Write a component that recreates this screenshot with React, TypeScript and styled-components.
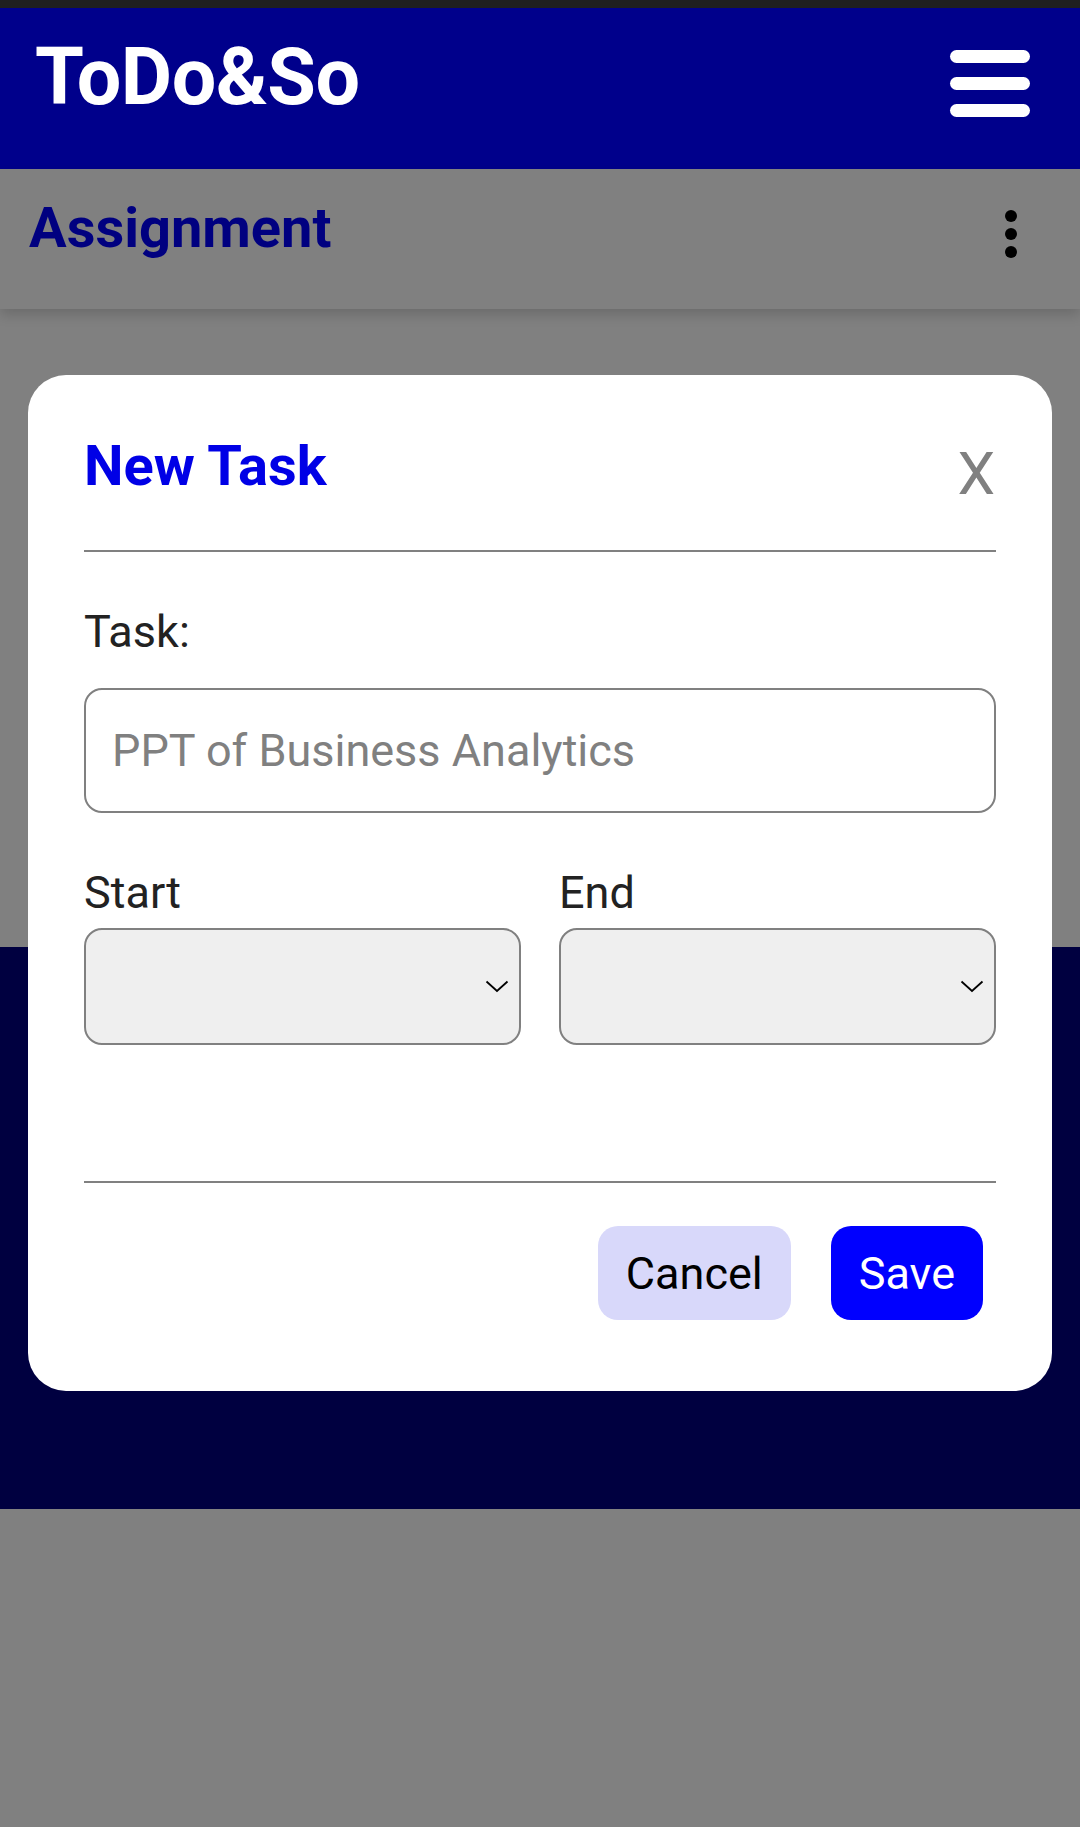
import React from "react";
import styled, { createGlobalStyle } from "styled-components";

const GlobalStyle = createGlobalStyle`
  html, body {
    margin: 0;
    padding: 0;
    background: #808080;
  }
  * { box-sizing: border-box; }
  body {
    font-family: Roboto, "Noto Sans", "Liberation Sans", sans-serif;
  }
`;

const Page = styled.div`
  position: relative;
  width: 1080px;
  min-height: 1827px;
  background: #808080;
  display: flex;
  flex-direction: column;
`;

const StatusStrip = styled.div`
  height: 8px;
  background: #1f1f1f;
`;

const Header = styled.header`
  height: 161px;
  background: #00008b;
  display: flex;
  justify-content: space-between;
  align-items: flex-start;
  padding: 0 50px 0 35px;
`;

const Logo = styled.h1`
  margin: 30px 0 0;
  font-size: 79px;
  line-height: 79px;
  font-weight: 700;
  color: #ffffff;
  letter-spacing: -0.5px;
`;

const MenuButton = styled.div`
  margin-top: 42px;
  width: 80px;
  display: flex;
  flex-direction: column;
  gap: 14px;
`;

const MenuBar = styled.span`
  display: block;
  height: 13px;
  border-radius: 7px;
  background: #ffffff;
`;

const SubBar = styled.div`
  position: relative;
  z-index: 1;
  height: 140px;
  background: #808080;
  box-shadow: 0 6px 12px rgba(0, 0, 0, 0.16);
  display: flex;
  justify-content: space-between;
  align-items: flex-start;
  padding: 0 63px 0 29px;
`;

const SectionTitle = styled.h2`
  margin: 26px 0 0;
  font-size: 56px;
  line-height: 66px;
  font-weight: 700;
  color: #000080;
`;

const Kebab = styled.div`
  margin-top: 41px;
  display: flex;
  flex-direction: column;
  gap: 6px;
`;

const Dot = styled.span`
  width: 12px;
  height: 12px;
  border-radius: 50%;
  background: #000000;
`;

const GreySpace = styled.div`
  height: 638px;
  background: #808080;
`;

const NavyBlock = styled.div`
  height: 562px;
  background: #000040;
`;

const Modal = styled.div`
  position: absolute;
  top: 375px;
  left: 28px;
  width: 1024px;
  background: #ffffff;
  border-radius: 38px;
  padding: 58px 56px 71px;
  display: flex;
  flex-direction: column;
`;

const ModalHeader = styled.div`
  height: 117px;
  display: flex;
  justify-content: space-between;
  align-items: flex-start;
`;

const ModalTitle = styled.h3`
  margin: 0;
  font-size: 56px;
  line-height: 66px;
  font-weight: 700;
  color: #0000e6;
`;

const CloseX = styled.span`
  margin-top: 11px;
  margin-right: 1px;
  font-size: 60px;
  line-height: 60px;
  font-weight: 400;
  color: #808080;
`;

const Divider = styled.hr<{ $gap?: number }>`
  margin: ${(p) => p.$gap ?? 0}px 0 0;
  border: none;
  height: 2px;
  background: #808080;
`;

const Label = styled.label<{ $top: number }>`
  display: block;
  margin-top: ${(p) => p.$top}px;
  font-size: 45px;
  line-height: 53px;
  color: #222222;
`;

const TextInput = styled.input`
  margin-top: 30px;
  width: 100%;
  height: 125px;
  border: 2px solid #808080;
  border-radius: 18px;
  padding: 0 24px 0 26px;
  font-family: Roboto, "Noto Sans", "Liberation Sans", sans-serif;
  font-size: 45px;
  color: #222222;
  background: #ffffff;
  outline: none;
  &::placeholder {
    color: #808080;
  }
`;

const TimeRow = styled.div`
  display: grid;
  grid-template-columns: 1fr 1fr;
  column-gap: 38px;
  margin-top: 53px;
`;

const TimeField = styled.div`
  display: flex;
  flex-direction: column;
`;

const SelectBox = styled.div`
  margin-top: 9px;
  height: 117px;
  border: 2px solid #808080;
  border-radius: 18px;
  background: #efefef;
  display: flex;
  align-items: center;
  justify-content: flex-end;
  padding-right: 10px;
`;

const Footer = styled.div`
  margin-top: 43px;
  display: flex;
  justify-content: flex-end;
  gap: 40px;
  padding-right: 13px;
`;

const ActionButton = styled.button<{ $primary?: boolean }>`
  height: 94px;
  padding: 0 28px;
  border: none;
  border-radius: 20px;
  font-family: Roboto, "Noto Sans", "Liberation Sans", sans-serif;
  font-size: 45px;
  font-weight: 400;
  background: ${(p) => (p.$primary ? "#0000ff" : "#d8d8fa")};
  color: ${(p) => (p.$primary ? "#ffffff" : "#000000")};
`;

const Chevron = () => (
  <svg width="24" height="13" viewBox="0 0 24 13" fill="none">
    <polyline points="1.5,1.5 12,11 22.5,1.5" stroke="#000" strokeWidth="1.8" fill="none" />
  </svg>
);

export default function App() {
  return (
    <>
      <GlobalStyle />
      <Page>
        <StatusStrip />
        <Header>
          <Logo>ToDo&amp;So</Logo>
          <MenuButton>
            <MenuBar />
            <MenuBar />
            <MenuBar />
          </MenuButton>
        </Header>
        <SubBar>
          <SectionTitle>Assignment</SectionTitle>
          <Kebab>
            <Dot />
            <Dot />
            <Dot />
          </Kebab>
        </SubBar>
        <GreySpace />
        <NavyBlock />

        <Modal>
          <ModalHeader>
            <ModalTitle>New Task</ModalTitle>
            <CloseX>X</CloseX>
          </ModalHeader>
          <Divider />
          <Label $top={53}>Task:</Label>
          <TextInput placeholder="PPT of Business Analytics" />
          <TimeRow>
            <TimeField>
              <Label $top={0}>Start</Label>
              <SelectBox>
                <Chevron />
              </SelectBox>
            </TimeField>
            <TimeField>
              <Label $top={0}>End</Label>
              <SelectBox>
                <Chevron />
              </SelectBox>
            </TimeField>
          </TimeRow>
          <Divider $gap={136} />
          <Footer>
            <ActionButton>Cancel</ActionButton>
            <ActionButton $primary>Save</ActionButton>
          </Footer>
        </Modal>
      </Page>
    </>
  );
}
